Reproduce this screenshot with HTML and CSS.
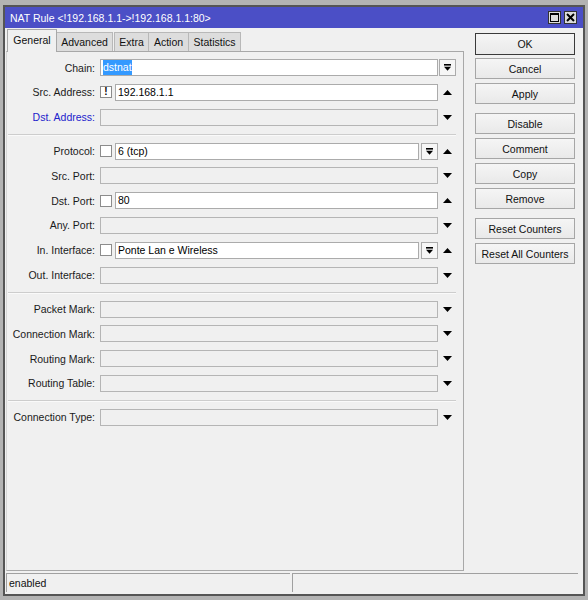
FILE: index.html
```html
<!DOCTYPE html>
<html>
<head>
<meta charset="utf-8">
<link rel="stylesheet" href="styles.css">
</head>
<body>
<div class="window">
  <div class="titlebar">
    <span class="title">NAT Rule &lt;!192.168.1.1-&gt;!192.168.1.1:80&gt;</span>
    <span class="tbtn">
      <svg width="11" height="11" viewBox="0 0 11 11"><rect x="1.5" y="1.5" width="8" height="8" fill="none" stroke="#000" stroke-width="1"/><rect x="1" y="1" width="9" height="2" fill="#000"/></svg>
    </span>
    <span class="tbtn">
      <svg width="11" height="11" viewBox="0 0 11 11"><path d="M2 2 L9 9 M9 2 L2 9" stroke="#000" stroke-width="2"/></svg>
    </span>
  </div>
  <div class="main">
    <div class="leftcol">
      <div class="tabs">
        <div class="tab active w-gen">General</div>
        <div class="tab w-adv">Advanced</div>
        <div class="tab w-ext">Extra</div>
        <div class="tab w-act">Action</div>
        <div class="tab w-sta">Statistics</div>
      </div>
      <div class="panel">
        <div class="group">
          <div class="row">
            <span class="lbl">Chain:</span>
            <div class="fld">
              <div class="inp"><span class="sel">dstnat</span></div>
              <span class="dd"><svg width="7" height="7" viewBox="0 0 7 7"><rect x="0" y="0" width="7" height="1.6" fill="#000"/><polygon points="0,2.8 7,2.8 3.5,6.8" fill="#000"/></svg></span>
            </div>
          </div>
          <div class="row">
            <span class="lbl">Src. Address:</span>
            <div class="fld">
              <span class="cb">!</span>
              <div class="inp">192.168.1.1</div>
              <span class="arr"><svg width="9" height="5" viewBox="0 0 9 5"><polygon points="0,5 4.5,0 9,5" fill="#000"/></svg></span>
            </div>
          </div>
          <div class="row">
            <span class="lbl blue">Dst. Address:</span>
            <div class="fld">
              <div class="inp dis"></div>
              <span class="arr"><svg width="9" height="5" viewBox="0 0 9 5"><polygon points="0,0 9,0 4.5,5" fill="#000"/></svg></span>
            </div>
          </div>
        </div>
        <div class="sep"></div>
        <div class="group">
          <div class="row">
            <span class="lbl">Protocol:</span>
            <div class="fld">
              <span class="cb"></span>
              <div class="inp">6 (tcp)</div>
              <span class="dd dd2"><svg width="7" height="7" viewBox="0 0 7 7"><rect x="0" y="0" width="7" height="1.6" fill="#000"/><polygon points="0,2.8 7,2.8 3.5,6.8" fill="#000"/></svg></span>
              <span class="arr"><svg width="9" height="5" viewBox="0 0 9 5"><polygon points="0,5 4.5,0 9,5" fill="#000"/></svg></span>
            </div>
          </div>
          <div class="row">
            <span class="lbl">Src. Port:</span>
            <div class="fld">
              <div class="inp dis"></div>
              <span class="arr"><svg width="9" height="5" viewBox="0 0 9 5"><polygon points="0,0 9,0 4.5,5" fill="#000"/></svg></span>
            </div>
          </div>
          <div class="row">
            <span class="lbl">Dst. Port:</span>
            <div class="fld">
              <span class="cb"></span>
              <div class="inp">80</div>
              <span class="arr"><svg width="9" height="5" viewBox="0 0 9 5"><polygon points="0,5 4.5,0 9,5" fill="#000"/></svg></span>
            </div>
          </div>
          <div class="row">
            <span class="lbl">Any. Port:</span>
            <div class="fld">
              <div class="inp dis"></div>
              <span class="arr"><svg width="9" height="5" viewBox="0 0 9 5"><polygon points="0,0 9,0 4.5,5" fill="#000"/></svg></span>
            </div>
          </div>
          <div class="row">
            <span class="lbl">In. Interface:</span>
            <div class="fld">
              <span class="cb"></span>
              <div class="inp">Ponte Lan e Wireless</div>
              <span class="dd dd2"><svg width="7" height="7" viewBox="0 0 7 7"><rect x="0" y="0" width="7" height="1.6" fill="#000"/><polygon points="0,2.8 7,2.8 3.5,6.8" fill="#000"/></svg></span>
              <span class="arr"><svg width="9" height="5" viewBox="0 0 9 5"><polygon points="0,5 4.5,0 9,5" fill="#000"/></svg></span>
            </div>
          </div>
          <div class="row">
            <span class="lbl">Out. Interface:</span>
            <div class="fld">
              <div class="inp dis"></div>
              <span class="arr"><svg width="9" height="5" viewBox="0 0 9 5"><polygon points="0,0 9,0 4.5,5" fill="#000"/></svg></span>
            </div>
          </div>
        </div>
        <div class="sep"></div>
        <div class="group">
          <div class="row">
            <span class="lbl">Packet Mark:</span>
            <div class="fld">
              <div class="inp dis"></div>
              <span class="arr"><svg width="9" height="5" viewBox="0 0 9 5"><polygon points="0,0 9,0 4.5,5" fill="#000"/></svg></span>
            </div>
          </div>
          <div class="row">
            <span class="lbl">Connection Mark:</span>
            <div class="fld">
              <div class="inp dis"></div>
              <span class="arr"><svg width="9" height="5" viewBox="0 0 9 5"><polygon points="0,0 9,0 4.5,5" fill="#000"/></svg></span>
            </div>
          </div>
          <div class="row">
            <span class="lbl">Routing Mark:</span>
            <div class="fld">
              <div class="inp dis"></div>
              <span class="arr"><svg width="9" height="5" viewBox="0 0 9 5"><polygon points="0,0 9,0 4.5,5" fill="#000"/></svg></span>
            </div>
          </div>
          <div class="row">
            <span class="lbl">Routing Table:</span>
            <div class="fld">
              <div class="inp dis"></div>
              <span class="arr"><svg width="9" height="5" viewBox="0 0 9 5"><polygon points="0,0 9,0 4.5,5" fill="#000"/></svg></span>
            </div>
          </div>
        </div>
        <div class="sep"></div>
        <div class="group">
          <div class="row">
            <span class="lbl">Connection Type:</span>
            <div class="fld">
              <div class="inp dis"></div>
              <span class="arr"><svg width="9" height="5" viewBox="0 0 9 5"><polygon points="0,0 9,0 4.5,5" fill="#000"/></svg></span>
            </div>
          </div>
        </div>
      </div>
    </div>
    <div class="btncol">
      <div class="btn ok">OK</div>
      <div class="btn">Cancel</div>
      <div class="btn">Apply</div>
      <div class="btn gap">Disable</div>
      <div class="btn">Comment</div>
      <div class="btn">Copy</div>
      <div class="btn">Remove</div>
      <div class="btn gap">Reset Counters</div>
      <div class="btn">Reset All Counters</div>
    </div>
  </div>
  <div class="status">
    <div class="pane p1">enabled</div>
    <div class="pane p2"></div>
  </div>
</div>
</body>
</html>
```
FILE: styles.css
```css
body {
  margin: 0;
  background: #b3b3b3;
  font-family: "Liberation Sans", Arial, sans-serif;
  font-size: 10.5px;
  color: #111;
}
.window {
  margin: 5px 0 0 3px;
  width: 578px;
  height: 587px;
  border: 2px solid #555;
  background: #f0f0f0;
  display: flex;
  flex-direction: column;
}
.titlebar {
  height: 21px;
  flex: none;
  background: #4b4fc6;
  color: #fff;
  display: flex;
  align-items: center;
  padding: 0 6px 0 5px;
  gap: 3px;
}
.title {
  flex: 1;
  white-space: nowrap;
}
.tbtn {
  width: 13px;
  height: 13px;
  box-sizing: border-box;
  border: 1px solid #333;
  background: #dcdcdc;
  display: flex;
  align-items: center;
  justify-content: center;
}
.tbtn svg { display: block; }
.main {
  height: 543px;
  flex: none;
  box-sizing: border-box;
  padding: 1px 0 0 1px;
  display: flex;
}
.leftcol {
  width: 458px;
  display: flex;
  flex-direction: column;
}
.tabs {
  height: 22px;
  display: flex;
  align-items: flex-end;
  padding-left: 1px;
}
.tab {
  height: 19px;
  box-sizing: border-box;
  border: 1px solid #b8b8b8;
  border-bottom: none;
  background: #dddddd;
  display: flex;
  align-items: center;
  justify-content: center;
  white-space: nowrap;
}
.tab.active {
  height: 23px;
  margin-bottom: -1px;
  background: #f0f0f0;
  position: relative;
  z-index: 1;
  border-color: #a8a8a8;
  padding-bottom: 2px;
}
.w-gen { width: 50px; }
.w-adv { width: 56px; border-left: none; }
.w-ext { width: 35px; margin-left: 1px; }
.w-act { width: 40px; border-left: none; }
.w-sta { width: 52px; border-left: none; }
.panel {
  height: 520px;
  box-sizing: border-box;
  border: 1px solid #a8a8a8;
  border-left-color: #d6d6d6;
  padding-top: 7px;
}
.group {
  display: flex;
  flex-direction: column;
  gap: 7.8px;
}
.row {
  display: flex;
  align-items: center;
  height: 17px;
}
.lbl {
  width: 88px;
  margin-right: 5px;
  text-align: right;
  white-space: nowrap;
  color: #1a1a1a;
}
.lbl.blue { color: #2222cc; }
.fld {
  width: 356px;
  height: 17px;
  display: flex;
  align-items: center;
}
.inp {
  flex: 1;
  height: 17px;
  box-sizing: border-box;
  border: 1px solid #ababab;
  background: #fff;
  padding-left: 2px;
  line-height: 15px;
  white-space: nowrap;
  overflow: hidden;
  color: #000;
}
.inp.dis {
  background: #f0f0f0;
  border-color: #b5b5b5;
}
.sel {
  background: #3399ff;
  color: #fff;
  padding: 1px 0 2px;
}
.cb {
  width: 12px;
  height: 12px;
  box-sizing: border-box;
  border: 1px solid #8c8c8c;
  background: #fff;
  margin-right: 3px;
  display: flex;
  align-items: center;
  justify-content: center;
  font-weight: bold;
  font-size: 10px;
  line-height: 10px;
  color: #000;
}
.dd {
  width: 17px;
  height: 17px;
  margin-left: 1px;
  box-sizing: border-box;
  border: 1px solid #ababab;
  background: #f6f6f6;
  display: flex;
  align-items: center;
  justify-content: center;
}
.dd.dd2 { margin-left: 2px; }
.dd svg, .arr svg { display: block; }
.arr {
  width: 18px;
  display: flex;
  justify-content: center;
}
.sep {
  margin: 8px 7px 7px 1px;
  border-top: 1px solid #cdcdcd;
  border-bottom: 1px solid #fafafa;
}
.btncol {
  width: 100px;
  margin-left: 11px;
  padding-top: 4px;
  display: flex;
  flex-direction: column;
  gap: 4px;
}
.btn {
  height: 21px;
  box-sizing: border-box;
  border: 1px solid #a6a6a6;
  background: linear-gradient(#f5f5f5, #e9e9e9);
  display: flex;
  align-items: center;
  justify-content: center;
  white-space: nowrap;
  color: #111;
}
.btn.ok {
  height: 22px;
  border-color: #3a3a3a;
  margin-bottom: -1px;
}
.btn.gap { margin-top: 5px; }
.status {
  flex: none;
  height: 19px;
  margin-top: 2px;
  padding-left: 1px;
  display: flex;
  gap: 2px;
}
.pane {
  height: 19px;
  box-sizing: border-box;
  border-top: 1px solid #a0a0a0;
  border-left: 1px solid #a0a0a0;
  padding-left: 2px;
  line-height: 18px;
  white-space: nowrap;
}
.p1 { width: 284px; }
.p2 { width: 286px; }
```
